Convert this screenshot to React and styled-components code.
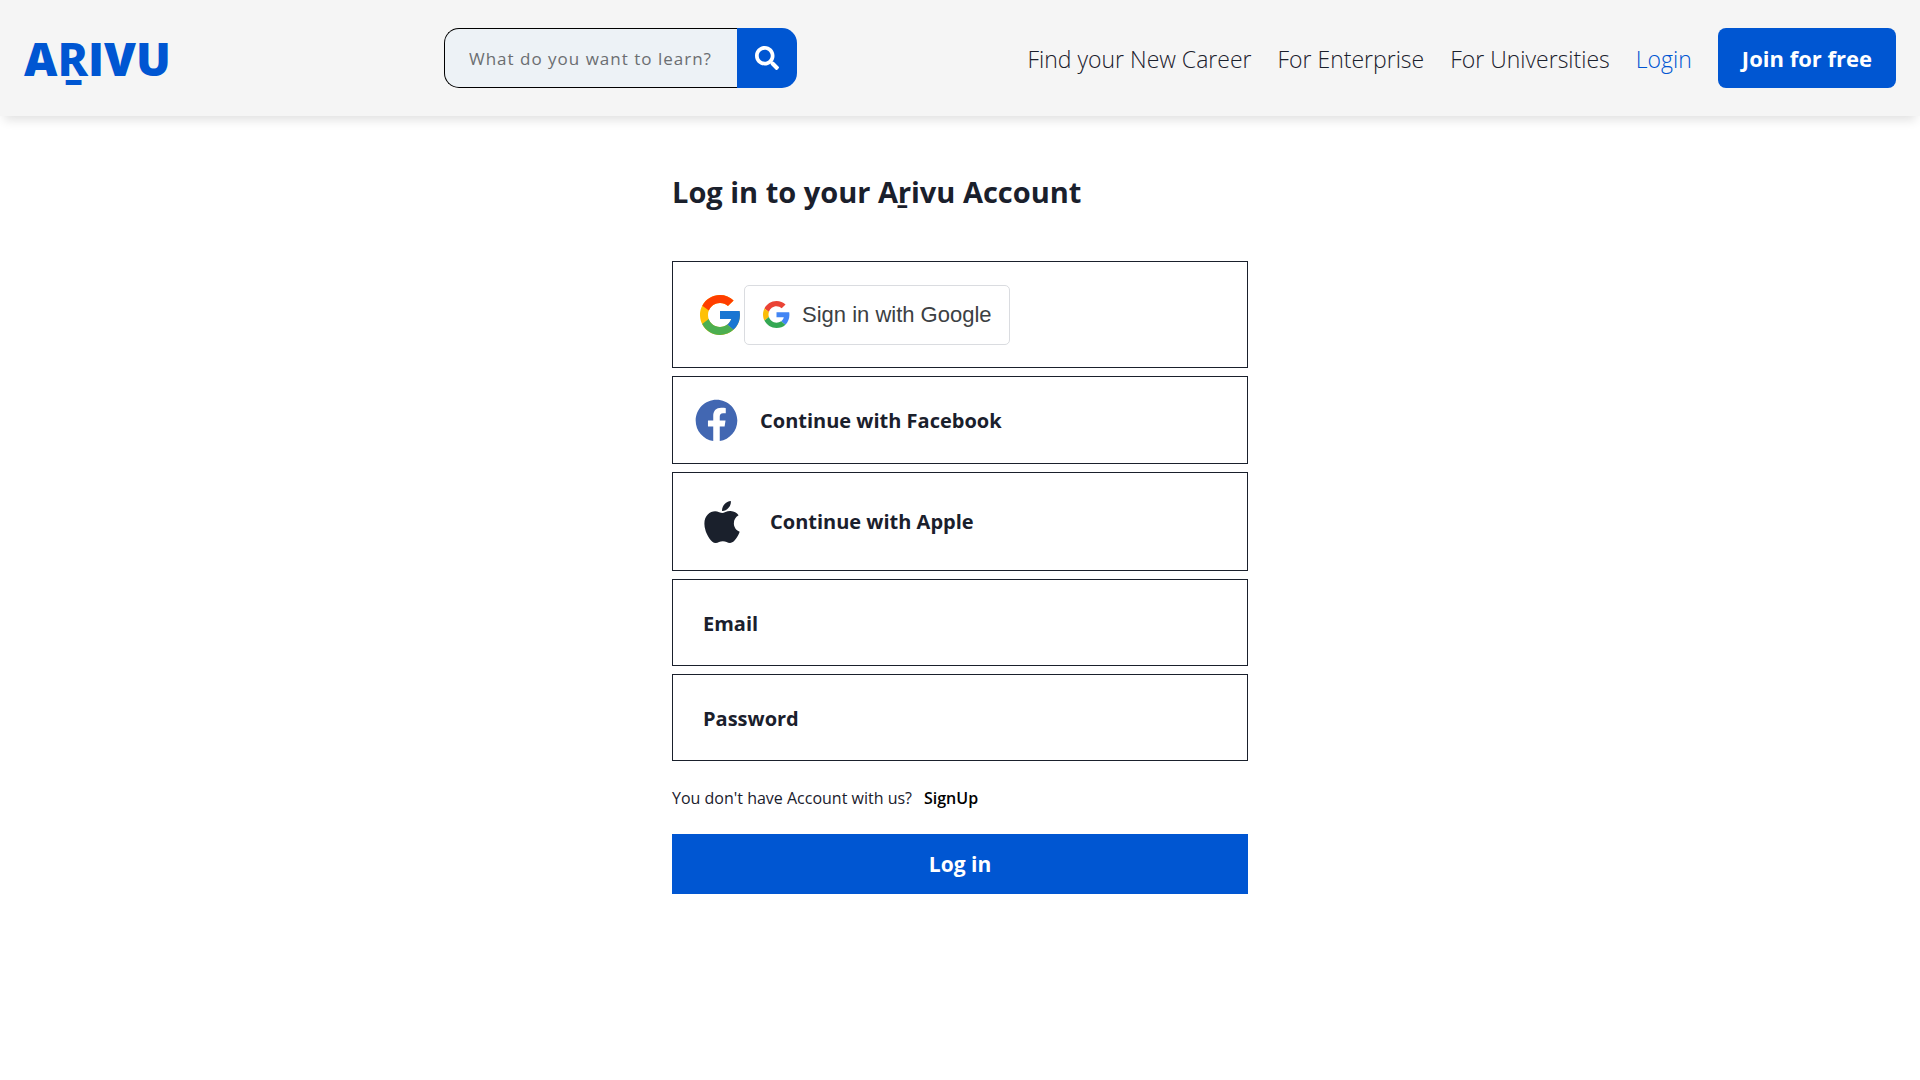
import React from "react";
import styled, { createGlobalStyle } from "styled-components";
import { FaSearch, FaFacebook, FaApple } from "react-icons/fa";
import { FcGoogle } from "react-icons/fc";

const blue = "#0056d2";
const ink = "#1a202c";

const GlobalStyle = createGlobalStyle`
  *, *::before, *::after { box-sizing: border-box; }
  body {
    margin: 0;
    background: #fff;
    color: ${ink};
    font-family: "Open Sans", "Noto Sans", sans-serif;
  }
  button, input { font-family: inherit; margin: 0; }
`;

const Header = styled.header`
  display: flex;
  align-items: center;
  padding: 28px 24px;
  background: #f5f5f5;
  box-shadow: 0 8px 10px -4px rgba(0, 0, 0, 0.12);
`;

const Logo = styled.a`
  flex: 0 0 420px;
  color: ${blue};
  font-size: 46px;
  font-weight: 800;
  line-height: 60px;
  text-decoration: none;
`;

const Search = styled.form`
  display: flex;
  flex: 0 1 353px;
  height: 60px;
`;

const SearchInput = styled.input`
  flex: 1;
  min-width: 0;
  padding: 0 0 0 24px;
  border: 1px solid #000;
  border-right: 0;
  border-radius: 15px 0 0 15px;
  background: #edf2f6;
  font-size: 17px;
  letter-spacing: 1px;
  outline: none;
  &::placeholder { color: #6b6e71; opacity: 1; }
`;

const SearchButton = styled.button`
  display: grid;
  place-items: center;
  width: 60px;
  border: 0;
  border-radius: 0 15px 15px 0;
  background: ${blue};
  color: #fff;
  font-size: 24px;
`;

const Nav = styled.nav`
  display: flex;
  align-items: center;
  gap: 26px;
  margin-left: auto;
`;

const NavLink = styled.a`
  padding-top: 2px;
  color: ${(p) => (p.$active ? blue : ink)};
  font-size: 23px;
  font-weight: 300;
  text-decoration: none;
  white-space: nowrap;
`;

const JoinButton = styled.button`
  height: 60px;
  padding: 0 24px;
  border: 0;
  border-radius: 8px;
  background: ${blue};
  color: #fff;
  font-size: 22px;
  font-weight: 700;
  white-space: nowrap;
`;

const Main = styled.main`
  width: 30%;
  margin: 0 auto;
  padding-top: 56px;
`;

const Title = styled.h1`
  margin: 0 0 49px;
  font-size: 29px;
  font-weight: 700;
  line-height: 40px;
  white-space: nowrap;
`;

const Form = styled.form`
  display: flex;
  flex-direction: column;
  gap: 8px;
`;

const GoogleRow = styled.div`
  display: flex;
  align-items: center;
  height: 107px;
  padding: 0 23px;
  border: 1px solid ${ink};
`;

const GoogleButton = styled.button`
  display: flex;
  align-items: center;
  gap: 12px;
  height: 60px;
  padding: 0 17px 0 18px;
  border: 1px solid #dadce0;
  border-radius: 5px;
  background: #fff;
  color: #3c4043;
  font-family: "Liberation Sans", Arial, sans-serif;
  font-size: 22px;
  white-space: nowrap;
`;

const ProviderButton = styled.button`
  display: flex;
  align-items: center;
  gap: ${(p) => p.$gap};
  height: ${(p) => p.$height};
  padding: 0 ${(p) => p.$inset};
  border: 1px solid ${ink};
  background: #fff;
  color: ${ink};
  font-size: 20px;
  font-weight: 700;
`;

const Field = styled.input`
  width: 100%;
  height: 87px;
  padding: 2px 30px 0;
  border: 1px solid ${ink};
  border-radius: 0;
  background: #fff;
  color: ${ink};
  font-size: 20px;
  font-weight: 700;
  outline: none;
  &::placeholder { color: ${ink}; opacity: 1; }
`;

const Note = styled.p`
  display: flex;
  gap: 12px;
  margin: 17px 0 15px;
  font-size: 16px;
  font-weight: 400;
  line-height: 25px;
  white-space: nowrap;
`;

const SignUpLink = styled.a`
  color: #000;
  font-weight: 600;
  text-decoration: none;
`;

const SubmitButton = styled.button`
  height: 60px;
  border: 0;
  background: ${blue};
  color: #fff;
  font-size: 21px;
  font-weight: 700;
`;

const GoogleMark = () => (
  <svg width="27" height="27" viewBox="0 0 48 48" aria-hidden="true">
    <path fill="#EA4335" d="M24 9.5c3.54 0 6.71 1.22 9.21 3.6l6.85-6.85C35.9 2.38 30.47 0 24 0 14.62 0 6.51 5.38 2.56 13.22l7.98 6.19C12.43 13.72 17.74 9.5 24 9.5z" />
    <path fill="#4285F4" d="M46.98 24.55c0-1.57-.15-3.09-.38-4.55H24v9.02h12.94c-.58 2.96-2.26 5.48-4.78 7.18l7.73 6c4.51-4.18 7.09-10.36 7.09-17.65z" />
    <path fill="#FBBC05" d="M10.53 28.59c-.48-1.45-.76-2.99-.76-4.59s.27-3.14.76-4.59l-7.98-6.19C.92 16.46 0 20.12 0 24c0 3.88.92 7.54 2.56 10.78l7.97-6.19z" />
    <path fill="#34A853" d="M24 48c6.48 0 11.93-2.13 15.89-5.81l-7.73-6c-2.15 1.45-4.92 2.3-8.16 2.3-6.26 0-11.57-4.22-13.47-9.91l-7.98 6.19C6.51 42.62 14.62 48 24 48z" />
  </svg>
);

export default function App() {
  return (
    <>
      <GlobalStyle />
      <Header>
        <Logo href="#home">AṞIVU</Logo>
        <Search role="search">
          <SearchInput aria-label="Search courses" placeholder="What do you want to learn?" />
          <SearchButton type="button" aria-label="Search"><FaSearch /></SearchButton>
        </Search>
        <Nav>
          <NavLink href="#career">Find your New Career</NavLink>
          <NavLink href="#enterprise">For Enterprise</NavLink>
          <NavLink href="#universities">For Universities</NavLink>
          <NavLink href="#login" $active>Login</NavLink>
          <JoinButton type="button">Join for free</JoinButton>
        </Nav>
      </Header>
      <Main>
        <Title>Log in to your Aṟivu Account</Title>
        <Form>
          <GoogleRow>
            <FcGoogle size={48} />
            <GoogleButton type="button"><GoogleMark />Sign in with Google</GoogleButton>
          </GoogleRow>
          <ProviderButton type="button" $height="88px" $inset="22px" $gap="22px">
            <FaFacebook size={43} color="#4267b2" />
            Continue with Facebook
          </ProviderButton>
          <ProviderButton type="button" $height="99px" $inset="25px" $gap="24px">
            <FaApple size={48} />
            Continue with Apple
          </ProviderButton>
          <Field type="email" aria-label="Email" placeholder="Email" />
          <Field type="password" aria-label="Password" placeholder="Password" />
          <Note>
            You don't have Account with us?
            <SignUpLink href="#signup">SignUp</SignUpLink>
          </Note>
          <SubmitButton type="button">Log in</SubmitButton>
        </Form>
      </Main>
    </>
  );
}
